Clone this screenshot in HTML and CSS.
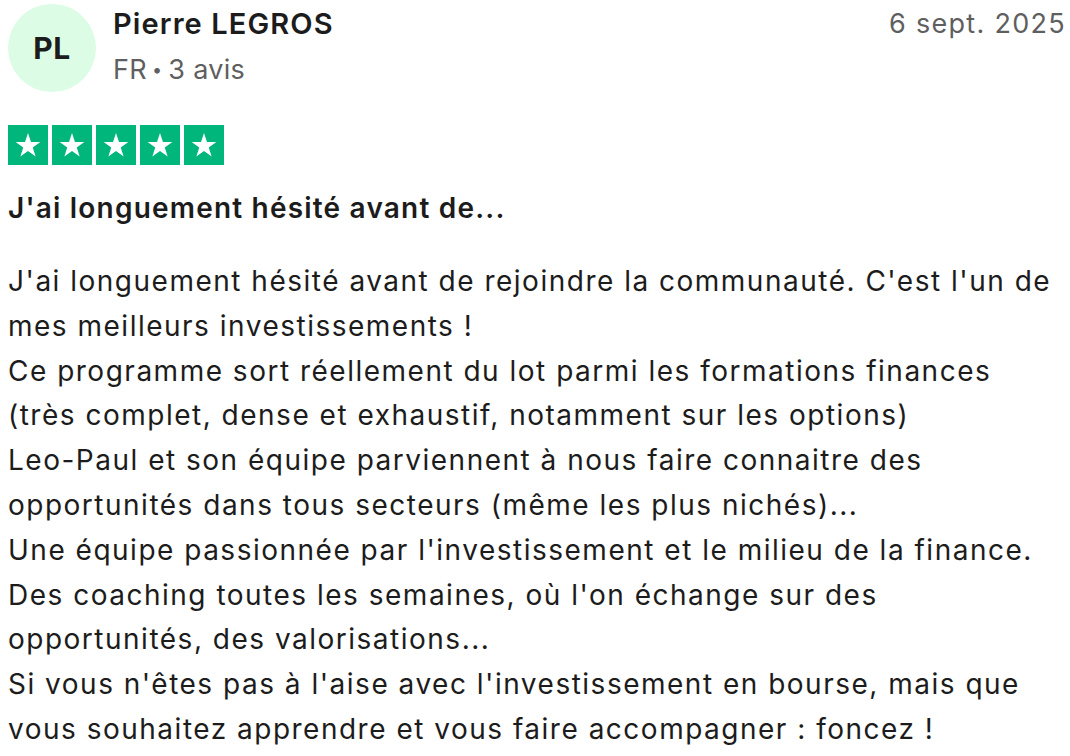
FILE: index.html
```html
<!DOCTYPE html>
<html lang="fr">
<head>
<meta charset="utf-8">
<link rel="stylesheet" href="styles.css">
</head>
<body>
<article class="review">
  <header class="review-head">
    <div class="avatar">PL</div>
    <div class="consumer">
      <div class="name">Pierre LEGROS</div>
      <div class="meta">FR<span class="dot">•</span>3 avis</div>
    </div>
    <time class="date">6 sept. 2025</time>
  </header>
  <div class="stars">
    <span class="star"><svg viewBox="0 0 24 24"><path d="M12 3.6l2.1 6.3h6.6l-5.35 3.9 2.05 6.3L12 16.2l-5.4 3.9 2.05-6.3L3.3 9.9h6.6z"/></svg></span>
    <span class="star"><svg viewBox="0 0 24 24"><path d="M12 3.6l2.1 6.3h6.6l-5.35 3.9 2.05 6.3L12 16.2l-5.4 3.9 2.05-6.3L3.3 9.9h6.6z"/></svg></span>
    <span class="star"><svg viewBox="0 0 24 24"><path d="M12 3.6l2.1 6.3h6.6l-5.35 3.9 2.05 6.3L12 16.2l-5.4 3.9 2.05-6.3L3.3 9.9h6.6z"/></svg></span>
    <span class="star"><svg viewBox="0 0 24 24"><path d="M12 3.6l2.1 6.3h6.6l-5.35 3.9 2.05 6.3L12 16.2l-5.4 3.9 2.05-6.3L3.3 9.9h6.6z"/></svg></span>
    <span class="star"><svg viewBox="0 0 24 24"><path d="M12 3.6l2.1 6.3h6.6l-5.35 3.9 2.05 6.3L12 16.2l-5.4 3.9 2.05-6.3L3.3 9.9h6.6z"/></svg></span>
  </div>
  <h2 class="title">J'ai longuement hésité avant de...</h2>
  <p class="text">J'ai longuement hésité avant de rejoindre la communauté. C'est l'un de mes meilleurs investissements !<br>Ce programme sort réellement du lot parmi les formations finances (très complet, dense et exhaustif, notamment sur les options)<br>Leo-Paul et son équipe parviennent à nous faire connaitre des opportunités dans tous secteurs (même les plus nichés)...<br>Une équipe passionnée par l'investissement et le milieu de la finance.<br>Des coaching toutes les semaines, où l'on échange sur des opportunités, des valorisations...<br>Si vous n'êtes pas à l'aise avec l'investissement en bourse, mais que vous souhaitez apprendre et vous faire accompagner : foncez !</p>
</article>
</body>
</html>
```

FILE: styles.css
```css
html, body {
  margin: 0;
  padding: 0;
  background: #ffffff;
}
body {
  font-family: Inter, "Noto Sans", sans-serif;
  color: #1c1c1c;
}
.review {
  padding: 4px 8px 0 8px;
  width: 1054px;
}
.review-head {
  display: flex;
  align-items: flex-start;
}
.avatar {
  width: 88px;
  height: 88px;
  border-radius: 50%;
  background: #dcfce5;
  color: #1c1c1c;
  font-size: 30px;
  font-weight: 700;
  letter-spacing: 0.6px;
  display: flex;
  align-items: center;
  justify-content: center;
  flex: none;
}
.consumer {
  margin-left: 17px;
  flex: 1;
}
.name {
  font-size: 29px;
  font-weight: 600;
  letter-spacing: 1.1px;
  line-height: 40px;
}
.meta {
  font-size: 27px;
  line-height: 40px;
  letter-spacing: 0.3px;
  color: #5f5f5f;
  margin-top: 6px;
}
.dot {
  font-size: 18px;
  margin: 0 6px 0 5px;
  vertical-align: 3px;
}
.date {
  font-size: 27px;
  line-height: 40px;
  letter-spacing: 1.3px;
  color: #5f5f5f;
  margin-right: -4px;
}
.stars {
  display: flex;
  gap: 4px;
  margin-top: 33px;
}
.star {
  width: 40px;
  height: 40px;
  background: #00b67a;
  display: flex;
  align-items: center;
  justify-content: center;
}
.star svg {
  width: 34px;
  height: 34px;
  fill: #ffffff;
}
.title {
  margin: 23px 0 0 0;
  font-size: 28px;
  font-weight: 600;
  letter-spacing: 1.2px;
  line-height: 40px;
}
.text {
  margin: 31px 0 0 0;
  font-size: 28px;
  line-height: 44.8px;
  letter-spacing: 1.5px;
  width: 1052px;
}
```
